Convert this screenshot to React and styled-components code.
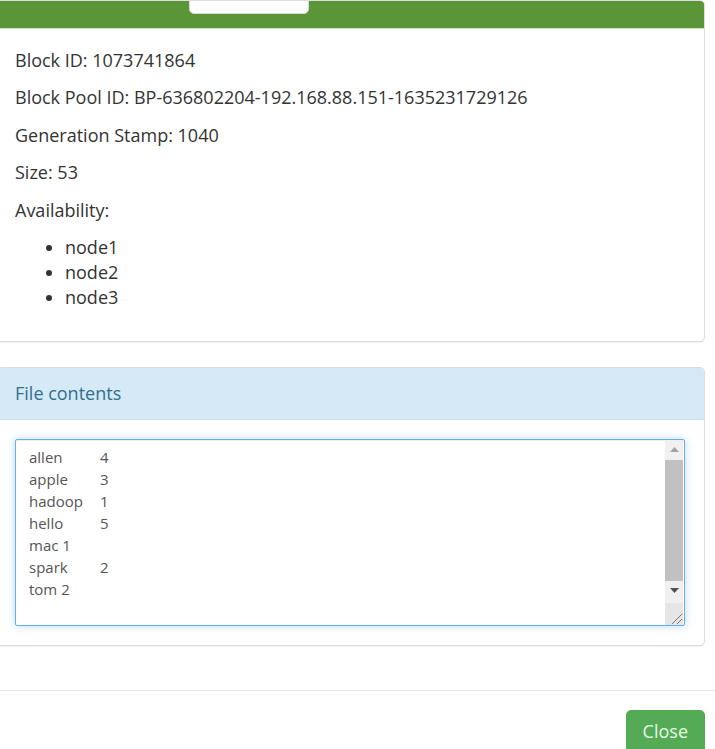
import React from "react";
import styled, {createGlobalStyle} from "styled-components";

const Global = createGlobalStyle`
  html, body {
    margin: 0;
    padding: 0;
    background: #fff;
    overflow: hidden;
  }
  body {
    font-family: "Open Sans", "Liberation Sans", sans-serif;
    color: #333;
    font-size: 18px;
    line-height: 25px;
  }
`;

const Modal = styled.div`
  width: 747px;
  margin-left: -23px;
`;

const ModalBody = styled.div`
  padding: 0 19px 19px 19px;
`;

const Panel = styled.div`
  background: #fff;
  border: 1px solid ${p => p.$border};
  border-radius: 5px;
  margin-bottom: 25px;
  box-shadow: 0 1px 1px rgba(0, 0, 0, 0.05);
  overflow: hidden;
`;

const GreenHeading = styled.div`
  background: #5a9538;
  height: 28px;
  border-bottom: 1px solid #c9e6b8;
  margin-top: -1px;
  padding-left: 192px;
  overflow: hidden;
`;

const TabButton = styled.button`
  display: block;
  width: 120px;
  height: 34px;
  margin-top: -20px;
  border: 1px solid #d8d8d8;
  border-radius: 5px;
  background: #fff;
`;

const InfoHeading = styled.div`
  background: #d5e9f6;
  color: #31708f;
  padding: 12.5px 18px 13px;
  border-bottom: 1px solid #c4e1f0;
`;

const Body = styled.div`
  padding: ${p => p.$pad} 19px ${p => p.$pad} 18px;
  p {
    margin: 0 0 12.5px;
  }
`;

const NodeList = styled.ul`
  margin: 0 0 12.5px;
  padding-left: 50px;
  li {
    line-height: 25px;
  }
`;

const TextBox = styled.div`
  display: flex;
  height: 187px;
  box-sizing: border-box;
  border: 1px solid #66afe9;
  border-radius: 2px;
  box-shadow: inset 0 1px 1px rgba(0, 0, 0, 0.075), 0 0 8px rgba(102, 175, 233, 0.45);
  background: #fff;
  overflow: hidden;
`;

const Area = styled.textarea`
  flex: 1;
  border: none;
  outline: none;
  resize: none;
  margin: 0;
  padding: 6px 13px;
  font-family: "Open Sans", "Liberation Sans", sans-serif;
  font-size: 15px;
  line-height: 22px;
  color: #555;
  tab-size: 71px;
  background: transparent;
  overflow: hidden;
`;

const ScrollCol = styled.div`
  width: 18px;
  margin-right: 1px;
  display: flex;
  flex-direction: column;
  background: #f0f0f0;
`;

const Arrow = styled.div`
  height: 20px;
  display: flex;
  align-items: center;
  justify-content: center;
`;

const Thumb = styled.div`
  flex: 1;
  background: #c1c1c1;
`;

const Corner = styled.div`
  height: 22px;
  margin-top: 2px;
  background: #e6e6e6;
  display: flex;
  align-items: flex-end;
  justify-content: flex-end;
`;

const Footer = styled.div`
  border-top: 1px solid #e5e5e5;
  padding: 19px;
  display: flex;
  justify-content: flex-end;
`;

const CloseButton = styled.button`
  background: #55ab55;
  border: 1px solid #4cae4c;
  border-radius: 5px;
  color: #e6fbe6;
  font-family: "Open Sans", "Liberation Sans", sans-serif;
  font-size: 18px;
  line-height: 25px;
  padding: 8px 16px;
`;

const contents = "allen\t4\napple\t3\nhadoop\t1\nhello\t5\nmac 1\nspark\t2\ntom 2\n";

export default function App() {
  return (
    <Modal>
      <Global />
      <ModalBody>
        <Panel $border="#ddd">
          <GreenHeading>
            <TabButton />
          </GreenHeading>
          <Body $pad="18.5px">
            <p>Block ID: 1073741864</p>
            <p>Block Pool ID: BP-636802204-192.168.88.151-1635231729126</p>
            <p>Generation Stamp: 1040</p>
            <p>Size: 53</p>
            <p>Availability:</p>
            <NodeList>
              <li>node1</li>
              <li>node2</li>
              <li>node3</li>
            </NodeList>
          </Body>
        </Panel>
        <Panel $border="#dcdcdc">
          <InfoHeading>File contents</InfoHeading>
          <Body $pad="19px">
            <TextBox>
              <Area readOnly defaultValue={contents} />
              <ScrollCol>
                <Arrow>
                  <svg width="9" height="5" viewBox="0 0 9 5">
                    <path d="M0 5 L4.5 0 L9 5 Z" fill="#a3a3a3" />
                  </svg>
                </Arrow>
                <Thumb />
                <Arrow>
                  <svg width="9" height="5" viewBox="0 0 9 5">
                    <path d="M0 0 L4.5 5 L9 0 Z" fill="#505050" />
                  </svg>
                </Arrow>
                <Corner>
                  <svg width="14" height="14" viewBox="0 0 14 14">
                    <path d="M3 13 L13 3 M8 13 L13 8" stroke="#777" strokeWidth="1" />
                  </svg>
                </Corner>
              </ScrollCol>
            </TextBox>
          </Body>
        </Panel>
      </ModalBody>
      <Footer>
        <CloseButton>Close</CloseButton>
      </Footer>
    </Modal>
  );
}
